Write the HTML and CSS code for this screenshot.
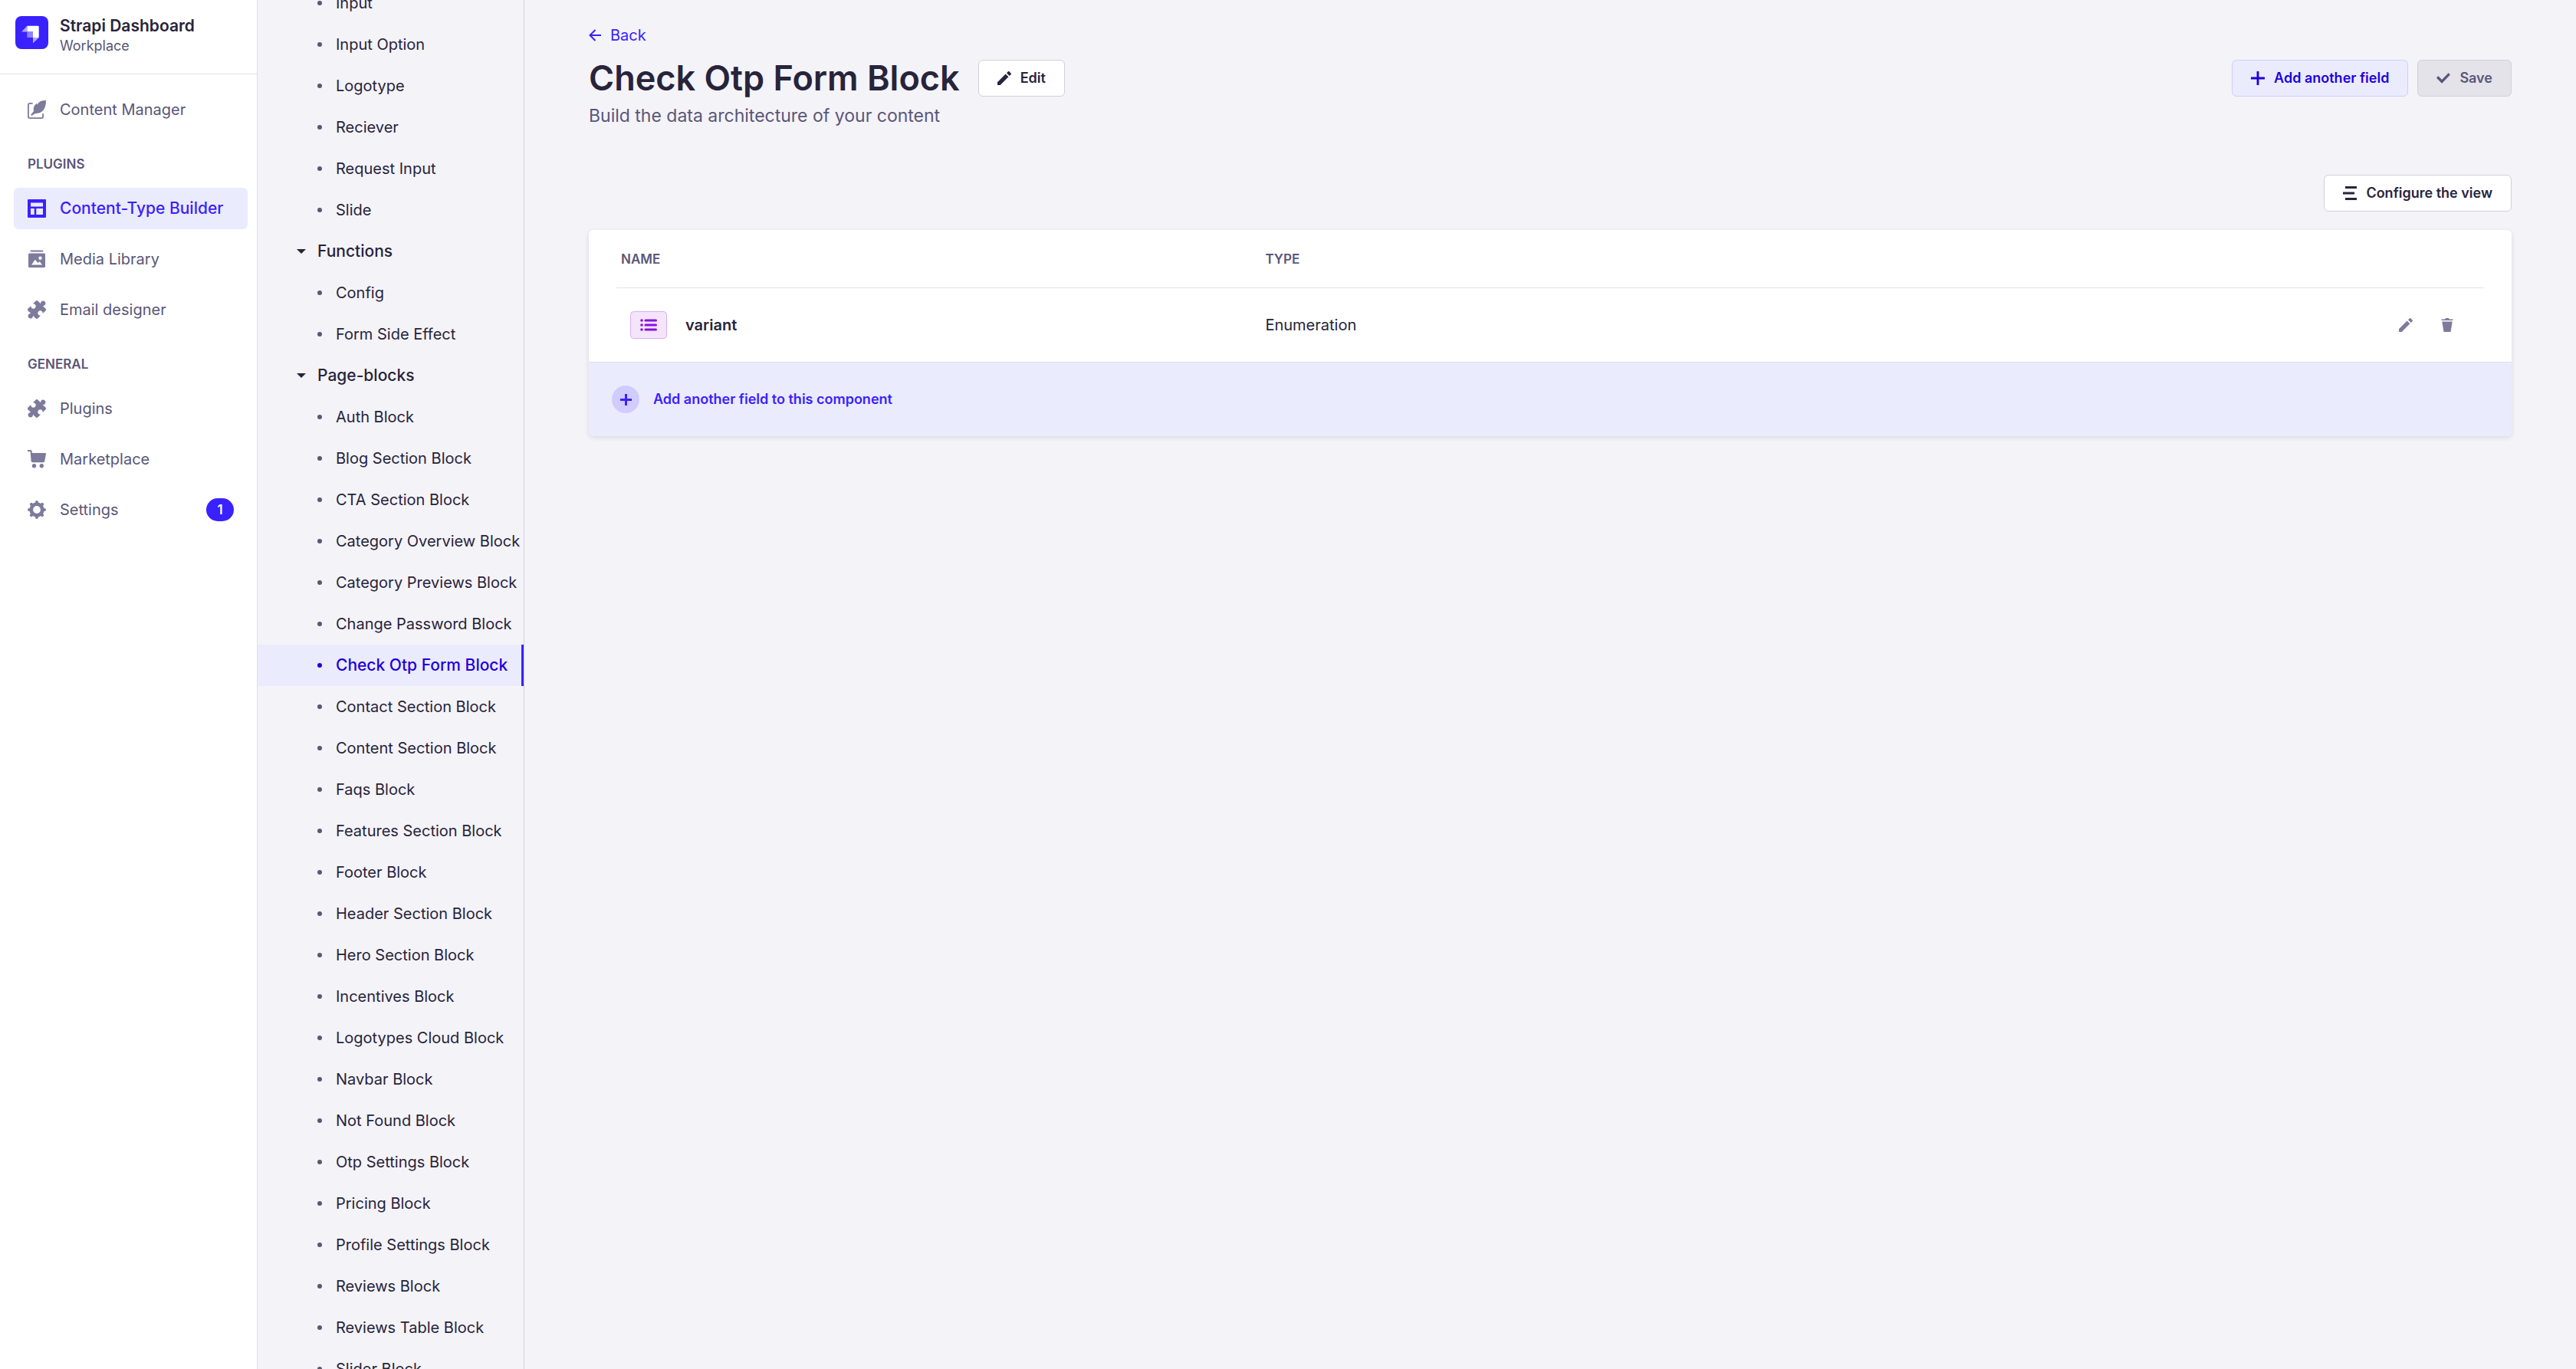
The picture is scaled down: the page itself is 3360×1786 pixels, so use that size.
FILE: index.html
```html
<!DOCTYPE html>
<html lang="en">
<head>
<meta charset="utf-8">
<title>Check Otp Form Block - Strapi Dashboard</title>
<link rel="stylesheet" href="styles.css">
</head>
<body>
<svg class="sprite" aria-hidden="true">
  <symbol id="i-pencil" viewBox="0 0 24 24"><path d="M23.604 3.514c.528.528.528 1.36 0 1.887l-2.622 2.607-4.99-4.99L18.6.396a1.322 1.322 0 0 1 1.887 0l3.118 3.118ZM0 24v-4.99l14.2-14.2 4.99 4.99L4.99 24H0Z"/></symbol>
  <symbol id="i-trash" viewBox="0 0 24 24"><path d="M3.236 6.149a.2.2 0 0 0-.197.233L6 24h12l2.96-17.618a.2.2 0 0 0-.196-.233H3.236ZM21.8 1.983c.11 0 .2.09.2.2v1.584a.2.2 0 0 1-.2.2H2.2a.2.2 0 0 1-.2-.2V2.183c0-.11.09-.2.2-.2h5.511c.9 0 1.631-1.09 1.631-1.983h5.316c0 .894.73 1.983 1.631 1.983H21.8Z"/></symbol>
  <symbol id="i-plus" viewBox="0 0 24 24"><path d="M24 13.6a.3.3 0 0 1-.3.3h-9.8v9.8a.3.3 0 0 1-.3.3h-3.2a.3.3 0 0 1-.3-.3v-9.8H.3a.3.3 0 0 1-.3-.3v-3.2a.3.3 0 0 1 .3-.3h9.8V.3a.3.3 0 0 1 .3-.3h3.2a.3.3 0 0 1 .3.3v9.8h9.8a.3.3 0 0 1 .3.3v3.2Z"/></symbol>
  <symbol id="i-check" viewBox="0 0 24 24"><path d="M20.727 2.97a.2.2 0 0 1 .286 0l2.85 2.89a.2.2 0 0 1 0 .28L9.554 20.854a.2.2 0 0 1-.285 0l-9.13-9.243a.2.2 0 0 1 0-.281l2.85-2.892a.2.2 0 0 1 .284 0l6.14 6.209L20.726 2.97Z"/></symbol>
  <symbol id="i-puzzle" viewBox="0 0 24 24"><path transform="translate(12 12) rotate(-45)" d="M-7-9H-1.8A3.2 3.2 0 1 0 1.8-9H7A2 2 0 0 1 9-7V-1.8A3.2 3.2 0 1 1 9 1.8V7A2 2 0 0 1 7 9H1.8A3.2 3.2 0 1 0-1.8 9H-7A2 2 0 0 1-9 7V1.8A3.2 3.2 0 1 1-9-1.8V-7A2 2 0 0 1-7-9Z"/></symbol>
</svg>
<div class="app">
  <aside class="sidebar">
    <div class="brand">
      <svg class="brand-logo" viewBox="0 0 43 43" aria-hidden="true">
        <rect width="43" height="43" rx="8" fill="#3a21ff"/>
        <path fill="#fff" d="M15.3 12.7H29.7a1 1 0 0 1 1 1V28H23V20.500H15.300Z"/>
        <path fill="#8e80ff" d="M15.300 20.500H23V28h-6.700a1 1 0 0 1-1-1Z"/>
        <path fill="#aea5ff" d="M15.300 12.700V20.500H8.800a.3.3 0 0 1-.2-.5ZM23 28H30.700L23.500 35a.3.3 0 0 1-.5-.2Z"/>
      </svg>
      <div>
        <div class="brand-name">Strapi Dashboard</div>
        <div class="brand-sub">Workplace</div>
      </div>
    </div>
    <nav class="menu" aria-label="Main">
      <a class="menu-item" href="#">
        <svg class="icon" viewBox="0 0 24 24"><path fill="none" stroke="currentColor" stroke-width="1.800" stroke-linecap="round" d="M6 3.800H2.900a2 2 0 0 0-2 2V21.100a2 2 0 0 0 2 2H18.100a2 2 0 0 0 2-2V18"/><path d="M24 0c.1 9.500-3.500 17.200-14.500 17.200L5.400 20.100 4 18.900l4-4.800C6.800 9.500 9.300 5.600 11.700 3.900l1 1.500C14.800 1.200 19 0 24 0Z"/></svg>
        <span>Content Manager</span>
      </a>
      <h2 class="menu-label">PLUGINS</h2>
      <a class="menu-item menu-item-active" href="#" aria-current="page">
        <svg class="icon" viewBox="0 0 24 24"><path fill-rule="evenodd" d="M1 0H23a1 1 0 0 1 1 1V23a1 1 0 0 1-1 1H1a1 1 0 0 1-1-1V1a1 1 0 0 1 1-1ZM4 4.500V9.500H20V4.500ZM4 12V20H8.700V12ZM11.300 12V20H20V12Z"/></svg>
        <span>Content-Type Builder</span>
      </a>
      <a class="menu-item" href="#">
        <svg class="icon" viewBox="0 0 24 24"><path fill-rule="evenodd" d="M4.500.5h15a.9.9 0 0 1 0 2h-15a.9.9 0 0 1 0-2ZM2.500 4.500h19A1.500 1.500 0 0 1 23 6v15.500a1.500 1.500 0 0 1-1.500 1.500h-19A1.500 1.500 0 0 1 1 21.500V6a1.500 1.500 0 0 1 1.500-1.500ZM16.500 8.500a2.200 2.200 0 1 0 0 4.400 2.200 2.200 0 0 0 0-4.400ZM5 19.500H19.200L15.700 15.200 13.500 17 9.800 12.800Z"/></svg>
        <span>Media Library</span>
      </a>
      <a class="menu-item" href="#"><svg class="icon"><use href="#i-puzzle"/></svg><span>Email designer</span></a>
      <h2 class="menu-label">GENERAL</h2>
      <a class="menu-item" href="#"><svg class="icon"><use href="#i-puzzle"/></svg><span>Plugins</span></a>
      <a class="menu-item" href="#">
        <svg class="icon" viewBox="0 0 24 24"><path d="M0 0H3.500C5 0 5.600 1 5.700 2.200L5.900 4H23.300a.7.7 0 0 1 .7.800L22.300 14.500A2 2 0 0 1 20.300 16.200H6.600a2 2 0 0 1-2-1.800L3.700 3C3.600 2.300 3.400 2 2.800 2H0Z"/><circle cx="8.500" cy="20.700" r="2.700"/><circle cx="18.300" cy="20.700" r="2.700"/></svg>
        <span>Marketplace</span>
      </a>
      <a class="menu-item" href="#">
        <svg class="icon" viewBox="0 0 24 24"><circle cx="12" cy="12" r="7.300" fill="none" stroke="currentColor" stroke-width="4.800"/><circle cx="12" cy="12" r="10" fill="none" stroke="currentColor" stroke-width="4" stroke-linecap="round" pathLength="80" stroke-dasharray=".01 9.990"/></svg>
        <span>Settings</span>
        <span class="badge">1</span>
      </a>
    </nav>
  </aside>

  <nav class="subnav" aria-label="Content types">
    <ul class="tree">
      <li><a class="leaf" href="#">Input</a></li>
      <li><a class="leaf" href="#">Input Option</a></li>
      <li><a class="leaf" href="#">Logotype</a></li>
      <li><a class="leaf" href="#">Reciever</a></li>
      <li><a class="leaf" href="#">Request Input</a></li>
      <li><a class="leaf" href="#">Slide</a></li>
      <li><button class="branch" type="button" aria-expanded="true">Functions</button></li>
      <li><a class="leaf" href="#">Config</a></li>
      <li><a class="leaf" href="#">Form Side Effect</a></li>
      <li><button class="branch" type="button" aria-expanded="true">Page-blocks</button></li>
      <li><a class="leaf" href="#">Auth Block</a></li>
      <li><a class="leaf" href="#">Blog Section Block</a></li>
      <li><a class="leaf" href="#">CTA Section Block</a></li>
      <li><a class="leaf" href="#">Category Overview Block</a></li>
      <li><a class="leaf" href="#">Category Previews Block</a></li>
      <li><a class="leaf" href="#">Change Password Block</a></li>
      <li><a class="leaf leaf-active" href="#" aria-current="page">Check Otp Form Block</a></li>
      <li><a class="leaf" href="#">Contact Section Block</a></li>
      <li><a class="leaf" href="#">Content Section Block</a></li>
      <li><a class="leaf" href="#">Faqs Block</a></li>
      <li><a class="leaf" href="#">Features Section Block</a></li>
      <li><a class="leaf" href="#">Footer Block</a></li>
      <li><a class="leaf" href="#">Header Section Block</a></li>
      <li><a class="leaf" href="#">Hero Section Block</a></li>
      <li><a class="leaf" href="#">Incentives Block</a></li>
      <li><a class="leaf" href="#">Logotypes Cloud Block</a></li>
      <li><a class="leaf" href="#">Navbar Block</a></li>
      <li><a class="leaf" href="#">Not Found Block</a></li>
      <li><a class="leaf" href="#">Otp Settings Block</a></li>
      <li><a class="leaf" href="#">Pricing Block</a></li>
      <li><a class="leaf" href="#">Profile Settings Block</a></li>
      <li><a class="leaf" href="#">Reviews Block</a></li>
      <li><a class="leaf" href="#">Reviews Table Block</a></li>
      <li><a class="leaf" href="#">Slider Block</a></li>
    </ul>
  </nav>

  <main class="content">
    <a class="back" href="#">
      <svg class="back-icon" viewBox="0 0 16 16" aria-hidden="true"><path fill="none" stroke="currentColor" stroke-width="2" d="M16 8H2M8.500 1 1.500 8l7 7"/></svg>
      Back
    </a>
    <header class="page-head">
      <h1>Check Otp Form Block</h1>
      <button class="btn" type="button"><svg class="btn-icon"><use href="#i-pencil"/></svg>Edit</button>
      <div class="page-actions">
        <button class="btn btn-secondary" type="button"><svg class="btn-icon"><use href="#i-plus"/></svg>Add another field</button>
        <button class="btn btn-disabled" type="button" disabled><svg class="btn-icon"><use href="#i-check"/></svg>Save</button>
      </div>
    </header>
    <p class="subtitle">Build the data architecture of your content</p>
    <div class="toolbar">
      <button class="btn" type="button"><svg class="btn-icon" viewBox="0 0 18 18"><path d="M3 0H18V3H3ZM0 7.500H15V10.500H0ZM3 15H18V18H3Z"/></svg>Configure the view</button>
    </div>
    <section class="card">
      <div class="card-body">
        <table class="fields">
          <thead>
            <tr><th class="col-name" scope="col">NAME</th><th scope="col">TYPE</th><th class="col-actions"></th></tr>
          </thead>
          <tbody>
            <tr>
              <td>
                <div class="field-name">
                  <svg class="field-icon" viewBox="0 0 48 36" aria-hidden="true"><rect x=".5" y=".5" width="47" height="35" rx="4" fill="#f4e4fc" stroke="#d9aef2"/><path stroke="#8a10e0" stroke-width="3" stroke-linecap="round" d="M20 12H33.500M20 18H33.500M20 24H33.500"/><g fill="#8a10e0"><circle cx="15" cy="12" r="1.800"/><circle cx="15" cy="18" r="1.800"/><circle cx="15" cy="24" r="1.800"/></g></svg>
                  variant
                </div>
              </td>
              <td>Enumeration</td>
              <td>
                <div class="row-actions">
                  <button class="icon-btn" type="button" aria-label="Edit variant"><svg class="btn-icon"><use href="#i-pencil"/></svg></button>
                  <button class="icon-btn" type="button" aria-label="Delete variant"><svg class="btn-icon"><use href="#i-trash"/></svg></button>
                </div>
              </td>
            </tr>
          </tbody>
        </table>
      </div>
      <button class="add-field" type="button">
        <span class="add-circle"><svg class="add-icon" viewBox="0 0 15 15"><path d="M6 0H9V6H15V9H9V15H6V9H0V6H6Z"/></svg></span>
        Add another field to this component
      </button>
    </section>
  </main>
</div>
</body>
</html>
```
FILE: styles.css
```css
* { box-sizing: border-box; }

body {
  margin: 0;
  background: #f4f3f8;
  color: #27243b;
  font: 20px/30px Inter, "Liberation Sans", sans-serif;
}

a { color: inherit; text-decoration: none; }
button { font: inherit; color: inherit; cursor: pointer; }
svg { display: block; flex: none; fill: currentColor; }

.sprite { position: absolute; width: 0; height: 0; }

.app {
  display: grid;
  grid-template-columns: 336px 348px minmax(0, 1fr);
  height: 100vh;
  overflow: hidden;
}

/* Main sidebar */
.sidebar { background: #fff; border-right: 1px solid #e0dfe9; }

.brand {
  display: flex;
  align-items: flex-start;
  gap: 15px;
  height: 97px;
  padding: 21px 20px 0;
  border-bottom: 1px solid #e0dfe9;
}
.brand-logo { width: 43px; height: 43px; }
.brand-name { font-size: 21px; font-weight: 600; line-height: 26px; }
.brand-sub { color: #5a5678; font-size: 18px; line-height: 26px; }

.menu { display: flex; flex-direction: column; gap: 12px; padding: 19px 12px 0 18px; }
.menu-item {
  display: flex;
  align-items: center;
  gap: 18px;
  height: 54px;
  padding: 0 18px;
  border-radius: 6px;
  color: #5a5678;
}
.menu-item .icon { width: 24px; height: 24px; color: #7e7a9c; }
.menu-item-active { background: #ebebfe; color: #3a21ff; font-size: 21px; font-weight: 500; }
.menu-item-active .icon { color: #3a21ff; }
.menu-label {
  margin: 20px 0 7px 18px;
  color: #5a5678;
  font-size: 17px;
  font-weight: 600;
  line-height: 24px;
}
.badge {
  width: 36px;
  margin-left: auto;
  border-radius: 15px;
  background: #3a21ff;
  color: #fff;
  font-size: 17px;
  font-weight: 600;
  text-align: center;
}

/* Content type tree, scrolled part of the way down */
.subnav { overflow: hidden; border-right: 1px solid #d2d0dc; }
.tree { margin: -23px 0 0; padding: 0; list-style: none; }
.leaf, .branch {
  display: flex;
  align-items: center;
  width: 100%;
  height: 54px;
  white-space: nowrap;
}
.leaf { gap: 18px; padding-left: 78px; }
.leaf::before {
  content: "";
  width: 6px;
  height: 6px;
  border-radius: 50%;
  background: #5a5678;
}
.leaf-active {
  border-right: 3px solid #3a21ff;
  background: #ebebfe;
  color: #1d00dc;
  font-size: 21px;
  font-weight: 500;
}
.leaf-active::before { background: #1d00dc; }
.branch {
  gap: 15px;
  padding: 0 0 0 51px;
  border: 0;
  background: none;
  font-size: 21px;
  font-weight: 500;
}
.branch::before {
  content: "";
  border: 6px solid transparent;
  border-top-color: #27243b;
  border-bottom: 0;
}

/* Page */
.content { padding: 31px 84px 0; }
.back { display: inline-flex; align-items: center; gap: 12px; color: #3a21ff; }
.back-icon { width: 16px; height: 16px; }
.page-head { display: flex; align-items: center; gap: 24px; height: 60px; margin-top: 10px; }
h1 { margin: 0; font-size: 45px; font-weight: 600; line-height: 60px; }
.page-actions { display: flex; gap: 12px; margin-left: auto; }
.subtitle { margin: 1px 0 0; color: #5a5678; font-size: 23px; line-height: 36px; }
.toolbar { display: flex; justify-content: flex-end; margin: 59px 0 24px; }

.btn {
  display: flex;
  align-items: center;
  gap: 12px;
  height: 48px;
  padding: 0 24px;
  border: 1px solid #d2d0dc;
  border-radius: 6px;
  background: #fff;
  font-size: 18px;
  font-weight: 600;
}
.btn-icon { width: 18px; height: 18px; }
.btn-secondary { border-color: #d0ccff; background: #ebebfe; color: #1d00dc; }
.btn-disabled { background: #e4e3ea; color: #5a5678; cursor: default; }

/* Fields table */
.card {
  overflow: hidden;
  border-radius: 6px;
  background: #fff;
  box-shadow: 0 2px 6px rgba(33, 33, 52, 0.12);
}
.card-body { padding: 0 36px; }
.fields { width: 100%; border-collapse: collapse; table-layout: fixed; }
.fields th {
  height: 75px;
  padding: 2px 6px 0;
  border-bottom: 1px solid #e4e3ea;
  color: #5a5678;
  font-size: 17px;
  font-weight: 600;
  text-align: left;
}
.fields td { height: 97px; padding: 0 6px; }
.col-name { width: 34.5%; }
.col-actions { width: 160px; }
.field-name { display: flex; align-items: center; gap: 24px; padding-left: 12px; font-weight: 600; }
.field-icon { width: 48px; height: 36px; }
.row-actions { display: flex; justify-content: flex-end; gap: 18px; padding-right: 24px; }
.icon-btn { padding: 9px; border: 0; background: none; color: #7e7a9c; }

.add-field {
  display: flex;
  align-items: center;
  gap: 18px;
  width: 100%;
  height: 97px;
  padding: 0 30px;
  border: 0;
  border-top: 1px solid #e0dfe9;
  background: #ebebfe;
  color: #3a21ff;
  font-size: 18px;
  font-weight: 600;
}
.add-circle {
  display: grid;
  place-items: center;
  width: 36px;
  height: 36px;
  border-radius: 50%;
  background: #d0ccff;
}
.add-icon { width: 15px; height: 15px; }
```
